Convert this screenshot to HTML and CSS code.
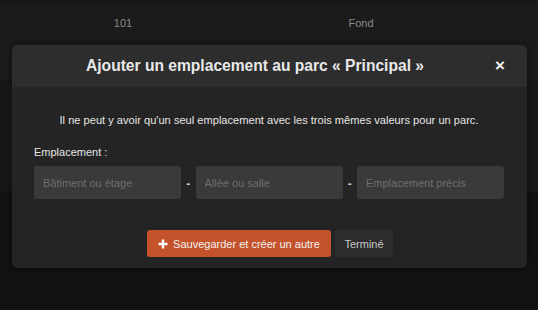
FILE: index.html
```html
<!DOCTYPE html>
<html lang="fr">
<head>
  <meta charset="UTF-8">
  <meta name="viewport" content="width=device-width, initial-scale=1">
  <title>Emplacements</title>
  <link rel="stylesheet" href="styles.css">
</head>

<body>

  <div class="liste">
    <div class="ligne ligne-haut"></div>
    <div class="ligne">
      <span class="cellule">101</span>
      <span class="cellule">Fond</span>
    </div>
    <div class="ligne ligne-vide"></div>
    <div class="ligne ligne-grande"></div>
  </div>

  <div class="modale">
    <div class="modale-entete">
      <h2>Ajouter un emplacement au parc « Principal »</h2>
      <span class="fermer">&times;</span>
    </div>

    <div class="modale-corps">
      <p class="info">Il ne peut y avoir qu'un seul emplacement avec les trois mêmes valeurs pour un parc.</p>

      <label class="etiquette">Emplacement :</label>
      <div class="champs">
        <input type="text" placeholder="Bâtiment ou étage">
        <span class="tiret">-</span>
        <input type="text" placeholder="Allée ou salle">
        <span class="tiret">-</span>
        <input type="text" placeholder="Emplacement précis">
      </div>

      <div class="actions">
        <button class="bouton-sauver">
          <svg width="10" height="10" viewBox="0 0 10 10"><path d="M5 0.5v9M0.5 5h9" stroke="#fff" stroke-width="2.4"/></svg>
          Sauvegarder et créer un autre
        </button>
        <button class="bouton-fin">Terminé</button>
      </div>
    </div>
  </div>

</body>
</html>
```

FILE: styles.css
```css
body {
  margin: 0;
  font-family: 'Liberation Sans', Arial, sans-serif;
  background: #121212;
  color: #ddd;
  position: relative;
  height: 310px;
  overflow: hidden;
}

.liste {
  background: #1b1b1b;
}

.ligne {
  display: flex;
  border-bottom: 1px solid #161616;
}

.ligne-haut {
  height: 3px;
  background: #191919;
}

.ligne .cellule {
  text-align: center;
  font-size: 11px;
  color: #8a8a8a;
  line-height: 38px;
}

.ligne .cellule:first-child {
  width: 246px;
}

.ligne .cellule:last-child {
  width: 230px;
}

.ligne-vide {
  height: 37px;
}

.ligne-grande {
  height: 110px;
  background: #181818;
}

.modale {
  position: absolute;
  left: 12px;
  top: 45px;
  width: 515px;
  height: 223px;
  background: #242424;
  border-radius: 6px;
  overflow: hidden;
  box-shadow: 0 0 10px rgba(0, 0, 0, 0.4);
}

.modale-entete {
  height: 42px;
  background: #2d2d2d;
  display: flex;
  align-items: center;
  justify-content: center;
  padding-right: 29px;
  position: relative;
}

.modale-entete h2 {
  margin: 0;
  font-size: 15.6px;
  color: #e8e8e8;
  font-weight: bold;
}

.fermer {
  position: absolute;
  right: 22px;
  top: 11px;
  font-size: 17px;
  font-weight: bold;
  color: #f2f2f2;
}

.modale-corps {
  padding: 26px 23px 0 22px;
}

.info {
  margin: 0;
  text-align: center;
  font-size: 11.1px;
  line-height: 15px;
  color: #e6e6e6;
}

.etiquette {
  display: block;
  margin-top: 17px;
  font-size: 11px;
  line-height: 15px;
  color: #e6e6e6;
}

.champs {
  display: flex;
  align-items: center;
  margin-top: 6px;
}

.champs input {
  width: 147px;
  height: 33px;
  box-sizing: border-box;
  border: none;
  border-radius: 3px;
  background: #3a3a3a;
  padding: 0 9px;
  font-family: inherit;
  font-size: 11px;
  color: #ccc;
}

.champs input::placeholder {
  color: #6e6e6e;
}

.tiret {
  width: 15px;
  padding-top: 2px;
  text-align: center;
  font-size: 12px;
  font-weight: bold;
  color: #ccc;
}

.actions {
  display: flex;
  justify-content: center;
  gap: 4px;
  margin-top: 31px;
}

.actions button {
  height: 27px;
  border: none;
  border-radius: 3px;
  font-family: inherit;
  font-size: 11px;
  cursor: pointer;
}

.bouton-sauver {
  width: 184px;
  background: #c4522a;
  color: #f2f2f2;
  display: flex;
  align-items: center;
  justify-content: center;
  gap: 5px;
  margin-left: 2px;
}

.bouton-fin {
  width: 58px;
  background: #2c2c2c;
  color: #c8c8c8;
}
```
